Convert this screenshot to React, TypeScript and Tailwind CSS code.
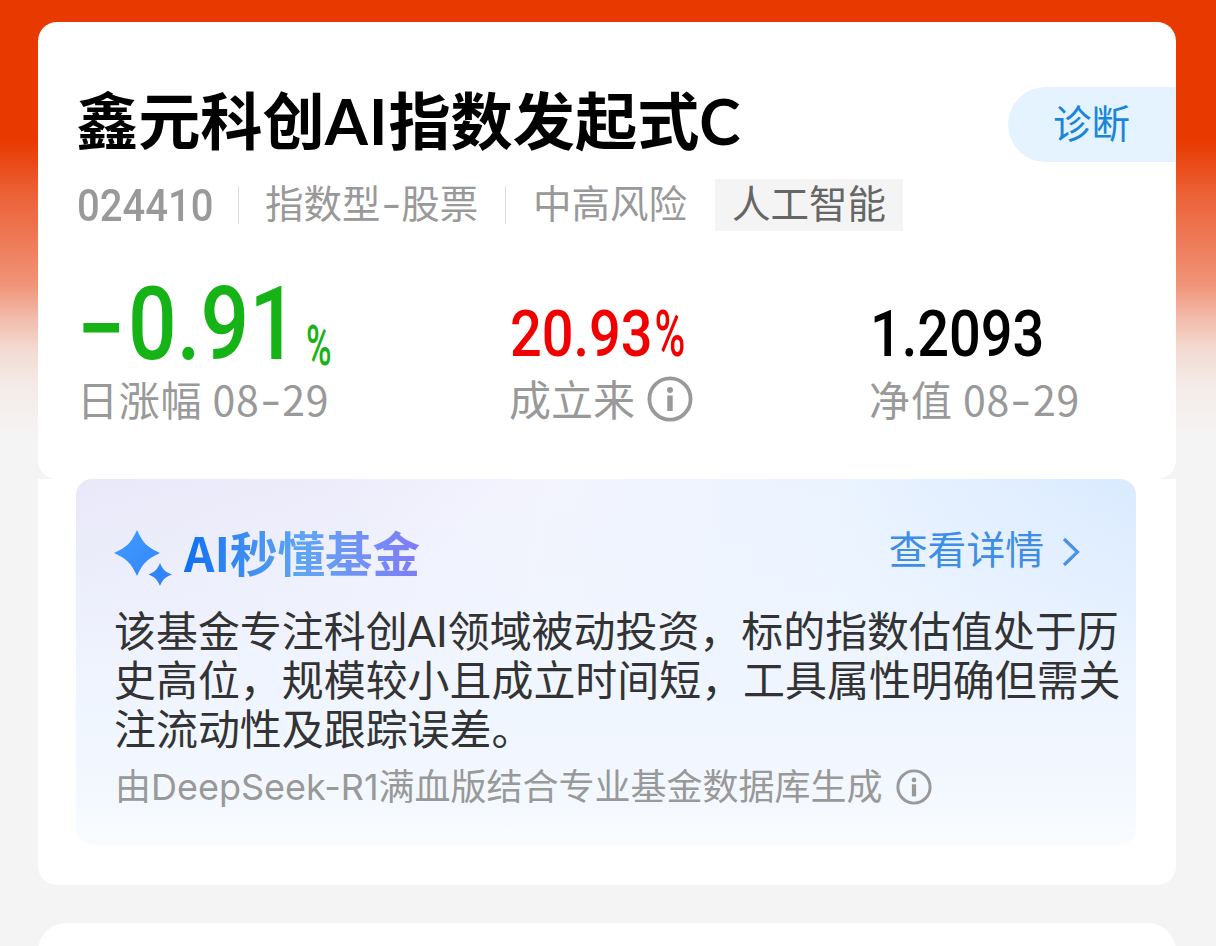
const InfoIcon = ({ className }: { className: string }) => (
  <svg viewBox="0 0 46 46" fill="none" className={className}>
    <circle cx="23" cy="23" r="20.6" stroke="#999" strokeWidth="3.8" />
    <circle cx="23" cy="14" r="3" fill="#999" />
    <path d="M23 19.5V35" stroke="#999" strokeWidth="5.4" />
  </svg>
);

const SparkIcon = () => (
  <svg viewBox="0 0 58 56" className="h-[56px] w-[58px]">
    <defs>
      <linearGradient id="spark" x1="0" y1="0" x2="1" y2="1">
        <stop offset="0" stopColor="#449cff" />
        <stop offset="1" stopColor="#2f86fb" />
      </linearGradient>
    </defs>
    <path d="M23 0C29 13 33 17 46 23C33 29 29 33 23 46C17 33 13 29 0 23C13 17 17 13 23 0Z" fill="url(#spark)" />
    <path d="M46 33C49 40 51 41.500 58 44.500C51 47.500 49 49 46 56C43 49 41 47.500 34.500 44.500C41 41.500 43 40 46 33Z" fill="#3184fa" />
  </svg>
);

const Dash = () => (
  <span className="mx-[1px] inline-block origin-center scale-x-115 px-[0.5px] font-[Inter] leading-none">-</span>
);

const FundHeader = () => (
  <div className="h-[457px] rounded-[19px] bg-white pt-[65px]">
    <div className="flex h-[75px] items-center justify-between pl-[38px]">
      <h1 className="pb-[8px] text-[62.2px] leading-[60px] font-bold whitespace-nowrap text-black">
        鑫元科创<span className="font-[Lato] leading-none tracking-[1px]">AI</span>指数发起式
        <span className="font-[Lato] leading-none">C</span>
      </h1>
      <button className="h-[75px] w-[168px] rounded-l-full bg-[#e4f3ff] pb-[8px] pl-[45px] text-left text-[38.500px] leading-[64px] text-[#1a86d9]">
        诊断
      </button>
    </div>

    <div className="mt-[17px] flex h-[52px] items-center pl-[39px] text-[38.500px] leading-[44px] whitespace-nowrap text-[#999]">
      <div className="w-[161px]">
        <span className="inline-block origin-left scale-x-91 font-[Roboto] text-[44px] font-medium">024410</span>
      </div>
      <span className="h-[38px] w-px bg-[#ddd]" />
      <span className="ml-[26px] w-[240px] pb-[8px]">
        指数型<Dash />股票
      </span>
      <span className="h-[38px] w-px bg-[#ddd]" />
      <span className="ml-[27px] w-[182px] pb-[8px]">中高风险</span>
      <span className="h-[52px] w-[188px] bg-[#f4f4f4] text-center text-[#666]">人工智能</span>
    </div>

    <div className="mt-[46px] flex whitespace-nowrap">
      <div className="w-[472px] pl-[41px]">
        <div className="flex h-[96px] items-baseline font-[Roboto] leading-[91px] font-medium text-[#16b316]">
          <span className="w-[49px] origin-left scale-x-108 text-[102px]">
            <span className="-ml-[3px] font-[Inter]">-</span>
          </span>
          <span className="w-[178px] origin-left scale-x-84 text-[102px]">0.91</span>
          <span className="origin-left translate-y-[6px] scale-x-62 text-[56px]">%</span>
        </div>
        <div className="-ml-[2px] text-[41px] leading-[50px] tracking-[0.8px] text-[#999]">
          日涨幅 08<Dash />29
        </div>
      </div>
      <div className="w-[360px]">
        <div className="h-[96px] origin-left scale-x-86 pt-[15px] font-[Roboto] text-[65px] leading-[84px] font-medium text-[#f20000]">
          20.93<span className="ml-[2px] inline-block origin-left scale-x-75">%</span>
        </div>
        <div className="mt-[2px] flex items-center text-[42px] leading-[46px] text-[#999]">
          <span className="-ml-px pb-[2px]">成立来</span>
          <InfoIcon className="ml-[12px] h-[46px] w-[46px]" />
        </div>
      </div>
      <div>
        <div className="h-[96px] origin-left scale-x-86 pt-[15px] font-[Roboto] text-[65px] leading-[84px] font-medium text-black">1.2093</div>
        <div className="-ml-px text-[41px] leading-[50px] tracking-[0.9px] text-[#999]">
          净值 08<Dash />29
        </div>
      </div>
    </div>
  </div>
);

const AiSummary = () => (
  <div className="h-[406px] rounded-b-[19px] bg-white pr-[40px] pl-[38px]">
    <div className="h-[366px] rounded-[16px] bg-[linear-gradient(180deg,#f4f9ff00_0%,#f0f6ff_65%,#f3f8ff_85%,#f9fcff_100%),linear-gradient(100deg,#e9e8f9_0%,#edecfb_22%,#f3f4fe_42%,#eaf3ff_68%,#d6e8ff_100%)] pt-[51px] pl-[38px] whitespace-nowrap">
      <div className="flex h-[56px] items-center">
        <SparkIcon />
        <h2 className="-mt-[13px] ml-[12px] bg-linear-to-r from-[#0a6ff0] via-[#5ea5f3] to-[#7f7bf8] bg-clip-text text-[47.500px] leading-[60px] font-bold text-transparent">
          AI秒懂基金
        </h2>
        <a className="ml-auto flex items-center pr-[56px] text-[38.800px] leading-[42px] text-[#408de6]">
          <span className="-mt-[22px]">查看详情</span>
          <svg viewBox="0 0 18 30" fill="none" className="-mt-[13px] ml-[18px] h-[30px] w-[18px]">
            <path d="M2 2L15.500 15L2 28" stroke="#4b92e6" strokeWidth="3.200" />
          </svg>
        </a>
      </div>
      <p className="mt-[18px] text-[41.950px] leading-[49px] text-[#333]">
        该基金专注科创<span className="font-[Lato] leading-none">AI</span>领域被动投资，标的指数估值处于历
        <br />
        史高位，规模较小且成立时间短，工具属性明确但需关
        <br />
        注流动性及跟踪误差。
      </p>
      <div className="mt-[16px] flex items-center text-[36px] leading-[46px] text-[#999]">
        <span className="-mt-[6px] pl-px">
          由<span className="font-[Inter] leading-none">DeepSeek-R1</span>满血版结合专业基金数据库生成
        </span>
        <InfoIcon className="ml-[13px] h-[36px] w-[36px]" />
      </div>
    </div>
  </div>
);

const App = () => {
  return (
    <div
      lang="zh-CN"
      className="h-[946px] w-[1216px] overflow-hidden bg-[#f4f4f4] bg-[linear-gradient(180deg,#e83900_0px,#e83900_140px,#ec6237_195px,#ee7c5a_245px,#f09478_285px,#f2b8a7_315px,#f3dad2_350px,#f4ebe8_385px,#f4f4f4_440px)] pt-[22px] pr-[40px] pl-[38px] font-['Noto_Sans_CJK_SC',sans-serif]"
    >
      <FundHeader />
      <AiSummary />
      <div className="mt-[38px] h-[80px] rounded-t-[28px] bg-white" />
    </div>
  );
};

export default App;
